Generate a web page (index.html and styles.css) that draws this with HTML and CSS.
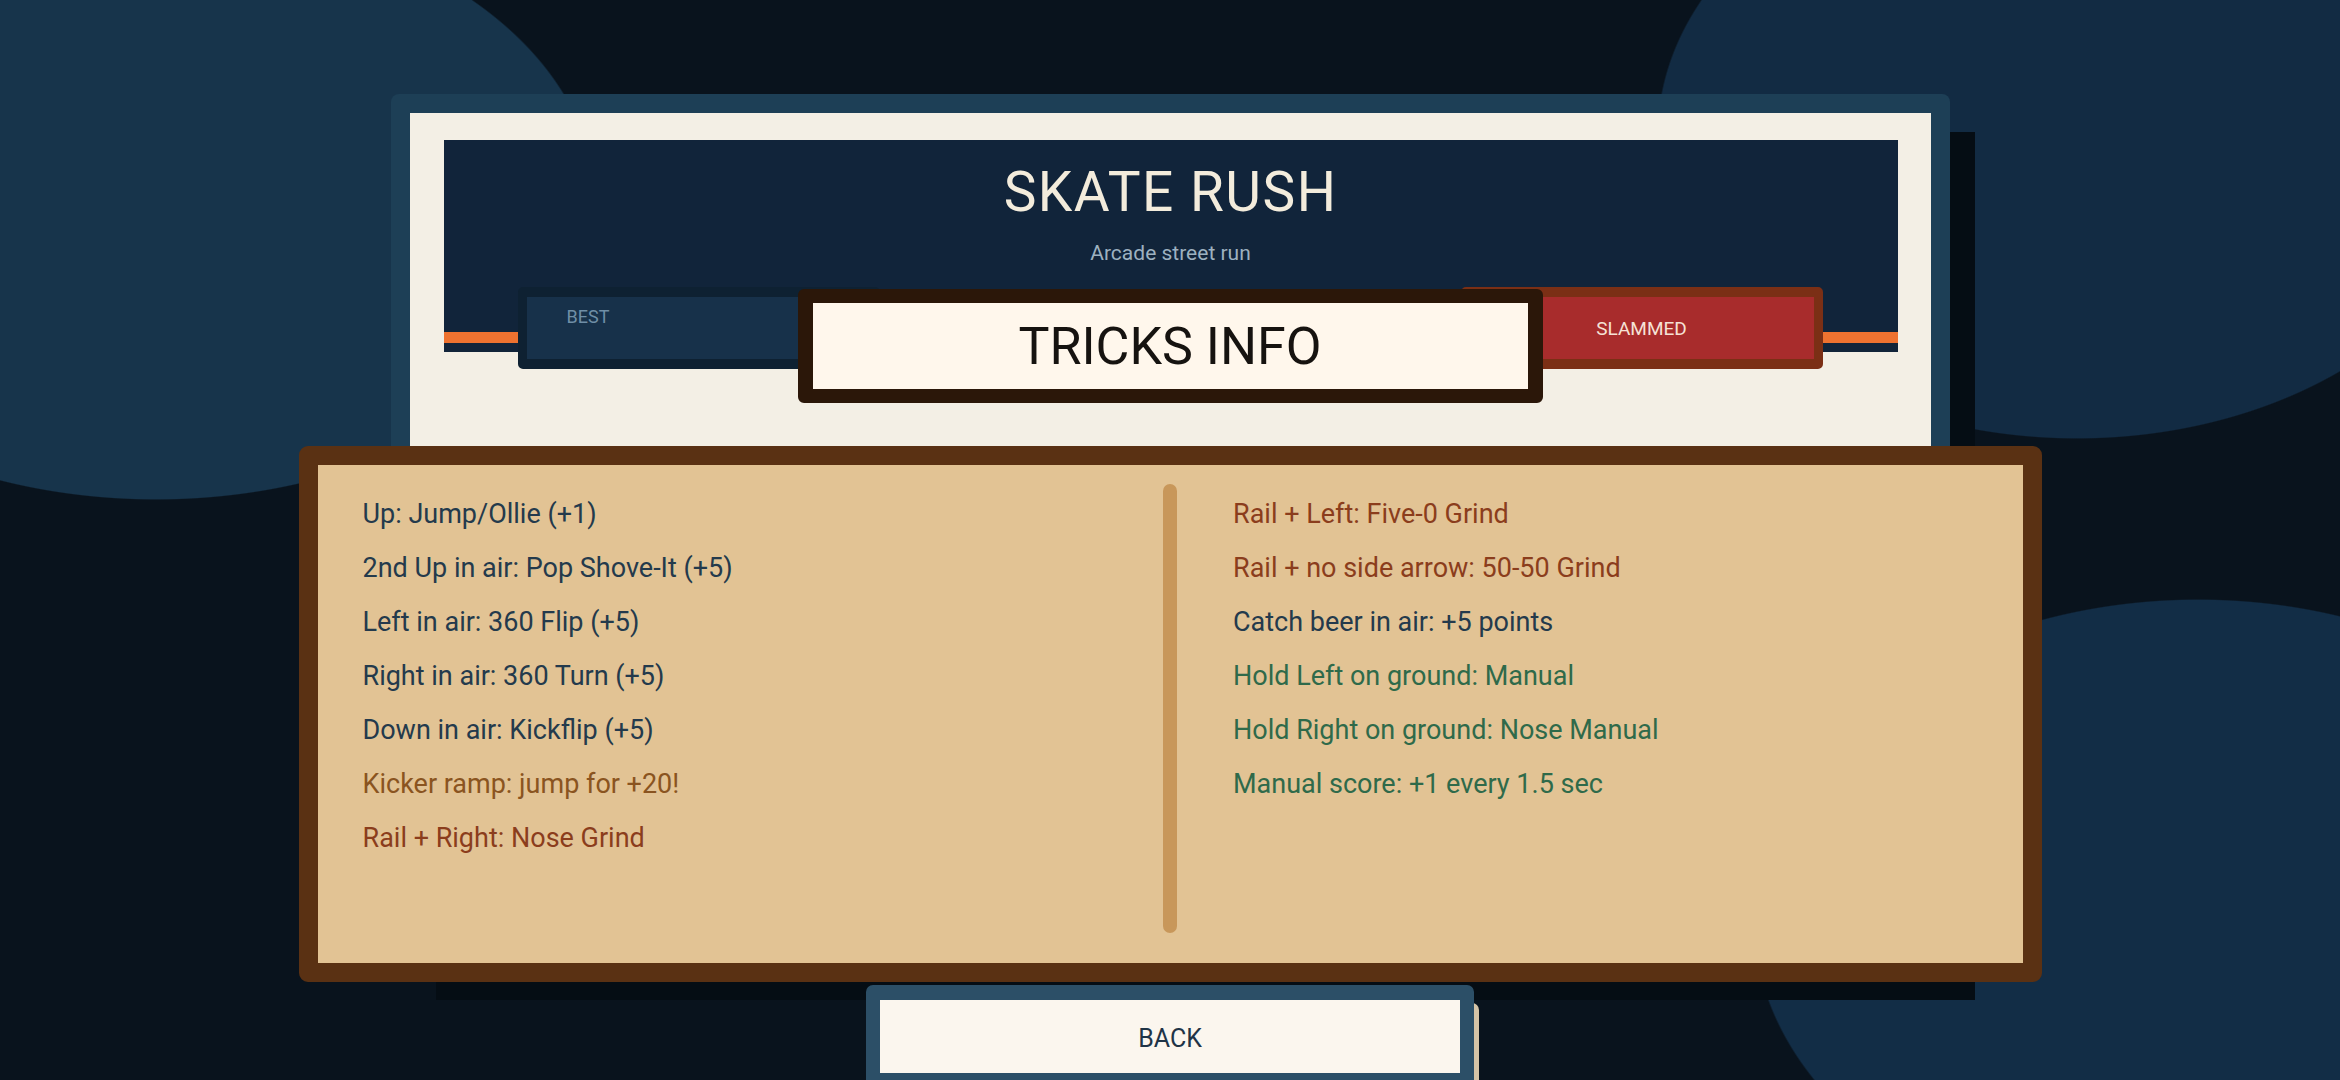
FILE: index.html
```html
<!DOCTYPE html>
<html lang="en">
<head>
    <meta charset="UTF-8">
    <meta name="viewport" content="width=device-width, initial-scale=1.0">
    <title>Skate Rush - Tricks Info</title>
    <link rel="stylesheet" href="styles.css">
</head>
<body>
    <div class="scene">
        <!-- Menu principal (en arrière-plan) -->
        <section class="menu">
            <div class="menu-inner">
                <header class="menu-head">
                    <h1>SKATE RUSH</h1>
                    <p class="tagline">Arcade street run</p>
                    <div class="stripe"></div>
                </header>
                <div class="stats">
                    <div class="stat stat-best"><span class="stat-label">BEST</span></div>
                    <div class="stat stat-slam"><span>SLAMMED</span></div>
                </div>
            </div>
        </section>

        <!-- Fenêtre des tricks par-dessus le menu -->
        <div class="overlay">
            <div class="tricks-title">TRICKS INFO</div>
            <div class="tricks-panel">
                <ul class="tricks-col">
                    <li>Up: Jump/Ollie (+1)</li>
                    <li>2nd Up in air: Pop Shove-It (+5)</li>
                    <li>Left in air: 360 Flip (+5)</li>
                    <li>Right in air: 360 Turn (+5)</li>
                    <li>Down in air: Kickflip (+5)</li>
                    <li class="kicker">Kicker ramp: jump for +20!</li>
                    <li class="rail">Rail + Right: Nose Grind</li>
                </ul>
                <div class="tricks-divider"></div>
                <ul class="tricks-col">
                    <li class="rail">Rail + Left: Five-0 Grind</li>
                    <li class="rail">Rail + no side arrow: 50-50 Grind</li>
                    <li>Catch beer in air: +5 points</li>
                    <li class="manual">Hold Left on ground: Manual</li>
                    <li class="manual">Hold Right on ground: Nose Manual</li>
                    <li class="manual">Manual score: +1 every 1.5 sec</li>
                </ul>
            </div>
            <button class="back-button">BACK</button>
        </div>
    </div>
</body>
</html>
```

FILE: styles.css
```css
body {
    margin: 0;
    height: 1080px;
    overflow: hidden;
    font-family: Roboto, "Liberation Sans", Arial, sans-serif;
    background:
        radial-gradient(441px 295px at 156px 205px, #17344b 99.6%, transparent 100%),
        radial-gradient(420px 304px at 2077px 135px, #122b43 99.6%, transparent 100%),
        radial-gradient(445px 320px at 2198px 919px, #122d46 99.6%, transparent 100%),
        #09131d;
}

.scene {
    position: relative;
    height: 1080px;
    padding-top: 94px;
    box-sizing: border-box;
}

/* Menu */
.menu {
    width: 1559px;
    height: 888px;
    margin: 0 auto;
    box-sizing: border-box;
    padding: 19px;
    background-color: #1d3f56;
    border-radius: 8px;
    box-shadow: 35px 28px 0 -10px #050d14;
}

.menu-inner {
    height: 100%;
    box-sizing: border-box;
    padding: 27px 33px 0 34px;
    background-color: #f3efe5;
}

.menu-head {
    background-color: #11243a;
    padding: 20px 0 9px;
    text-align: center;
}

.menu-head h1 {
    margin: 0;
    font-size: 55px;
    line-height: 64px;
    font-weight: 400;
    letter-spacing: 1.5px;
    color: #f3ecdc;
}

.tagline {
    margin: 17px 0 0;
    font-size: 21px;
    line-height: 24px;
    color: #9db1c0;
}

.stripe {
    height: 11px;
    margin-top: 67px;
    background-color: #ee7230;
}

.stats {
    position: relative;
    display: flex;
    justify-content: space-between;
    margin: -65px 75px 0 74px;
}

.stat {
    width: 362px;
    height: 82px;
    box-sizing: border-box;
    border-style: solid;
    border-width: 10px 9px;
    border-radius: 5px;
}

.stat-best {
    background-color: #17314a;
    border-color: #0e2132;
    padding: 10px 0 0 40px;
}

.stat-label {
    font-size: 18px;
    line-height: 20px;
    color: #6f8ea6;
}

.stat-slam {
    display: flex;
    align-items: center;
    justify-content: center;
    background-color: #a82c2c;
    border-color: #7b2f15;
    font-size: 19px;
    color: #f6e2d6;
}

/* Fenêtre tricks */
.overlay {
    position: absolute;
    inset: 0;
    display: flex;
    flex-direction: column;
    align-items: center;
    padding-top: 289px;
}

.overlay > * {
    flex-shrink: 0;
}

.tricks-title {
    position: relative;
    z-index: 1;
    width: 745px;
    height: 114px;
    box-sizing: border-box;
    border: solid #2b1709;
    border-width: 14px 15px;
    border-radius: 6px;
    background-color: #fff7ec;
    font-size: 52px;
    line-height: 87px;
    text-align: center;
    color: #161310;
}

.tricks-panel {
    width: 1743px;
    height: 536px;
    margin-top: 43px;
    box-sizing: border-box;
    border: 19px solid #5a3113;
    border-radius: 9px;
    padding: 19px 45px 30px;
    background-color: #e2c394;
    display: grid;
    grid-template-columns: 1fr 14px 1fr;
    column-gap: 56px;
}

.tricks-col {
    list-style: none;
    margin: 3px 0 0;
    padding: 0;
    font-size: 27px;
    line-height: 54px;
    color: #243a4c;
}

.tricks-col .kicker {
    color: #8a5420;
}

.tricks-col .rail {
    color: #8b3d1c;
}

.tricks-col .manual {
    color: #2f6a4a;
}

.tricks-divider {
    background-color: #c8975a;
    border-radius: 7px;
}

.back-button {
    width: 608px;
    height: 103px;
    margin-top: 3px;
    padding: 3px 0 0;
    box-sizing: border-box;
    border: solid #2c4f67;
    border-width: 15px 14px;
    border-radius: 7px;
    background-color: #fbf6ee;
    box-shadow: 5px 18px 0 #d6c4a6;
    font-family: inherit;
    font-size: 25px;
    color: #1f3447;
    cursor: pointer;
}
```
